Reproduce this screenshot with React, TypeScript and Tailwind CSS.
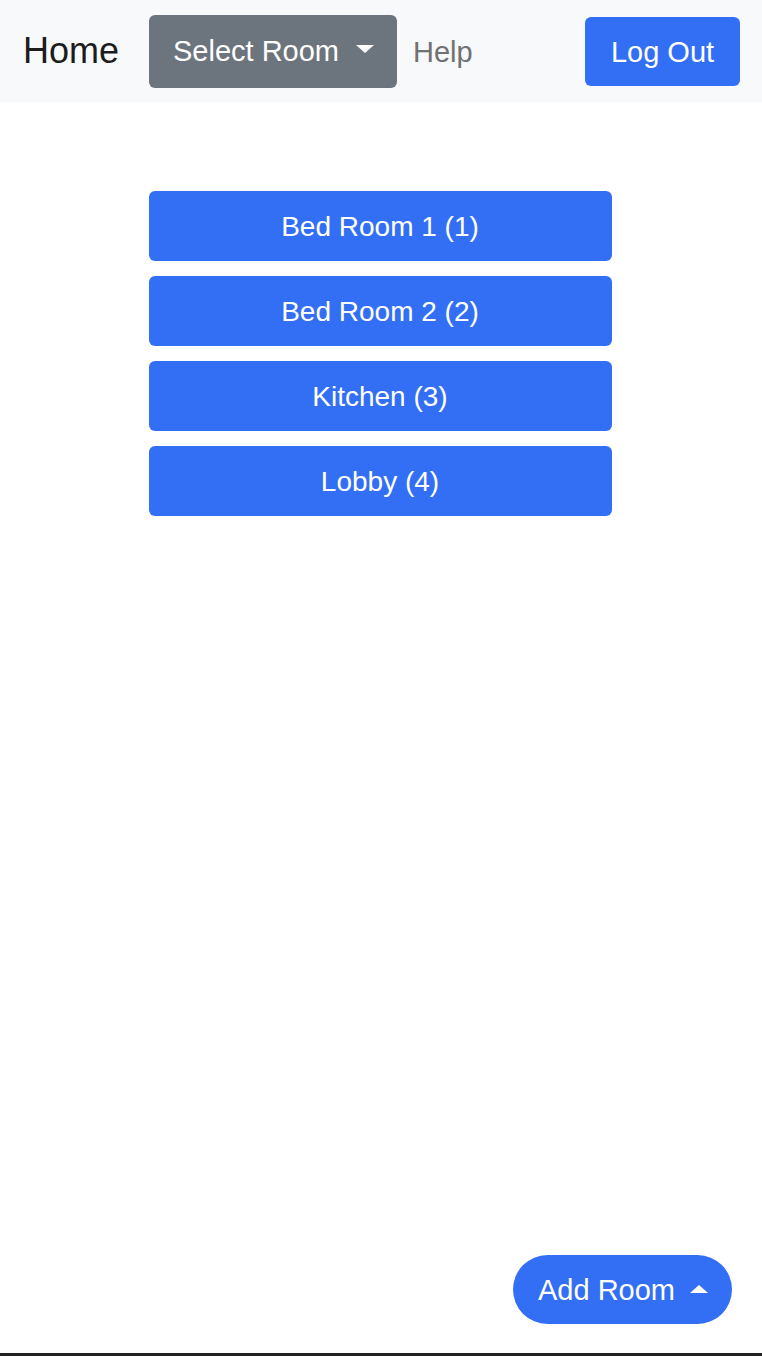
const rooms = ["Bed Room 1 (1)", "Bed Room 2 (2)", "Kitchen (3)", "Lobby (4)"];

function Caret({ up = false }: { up?: boolean }) {
  return (
    <span
      className={
        up
          ? "inline-block w-0 h-0 border-x-[9px] border-x-transparent border-b-[8px] border-b-white"
          : "inline-block w-0 h-0 border-x-[9px] border-x-transparent border-t-[8px] border-t-white"
      }
    />
  );
}

export default function App() {
  return (
    <div className="h-[1356px] flex flex-col bg-white font-['Liberation_Sans',Arial,sans-serif] text-[29px]">
      <nav className="h-[102px] shrink-0 bg-[#f8f9fa] flex items-center pl-[23px] pr-[22px]">
        <span className="w-[126px] text-[36px] leading-none text-[#1c1c1c]">Home</span>
        <button className="w-[248px] h-[73px] rounded-[6px] bg-[#6c757d] text-white flex items-center justify-between pl-[24px] pr-[23px]">
          <span className="leading-none">Select Room</span>
          <span className="mt-[-4px] flex">
            <Caret />
          </span>
        </button>
        <span className="ml-[16px] pt-[2px] text-[#707172] leading-none">Help</span>
        <button className="ml-auto w-[155px] h-[69px] pt-[2px] rounded-[6px] bg-[#336ff4] text-white flex items-center justify-center leading-none">
          Log Out
        </button>
      </nav>

      <main className="flex-1 flex flex-col items-center pt-[89px] gap-[15px] pr-[2px]">
        {rooms.map((room) => (
          <button
            key={room}
            className="w-[463px] h-[70px] pt-[2px] rounded-[6px] bg-[#336ff4] text-white text-[28px] flex items-center justify-center leading-none"
          >
            {room}
          </button>
        ))}
      </main>

      <div className="flex justify-end pr-[30px] pb-[29px]">
        <button className="w-[219px] h-[69px] pt-[2px] rounded-full bg-[#336ff4] text-white flex items-center pl-[25px] gap-[15px] leading-none">
          <span>Add Room</span>
          <span className="mt-[-3px] flex">
            <Caret up />
          </span>
        </button>
      </div>
      <div className="h-[3px] shrink-0 bg-[#222222]" />
    </div>
  );
}
